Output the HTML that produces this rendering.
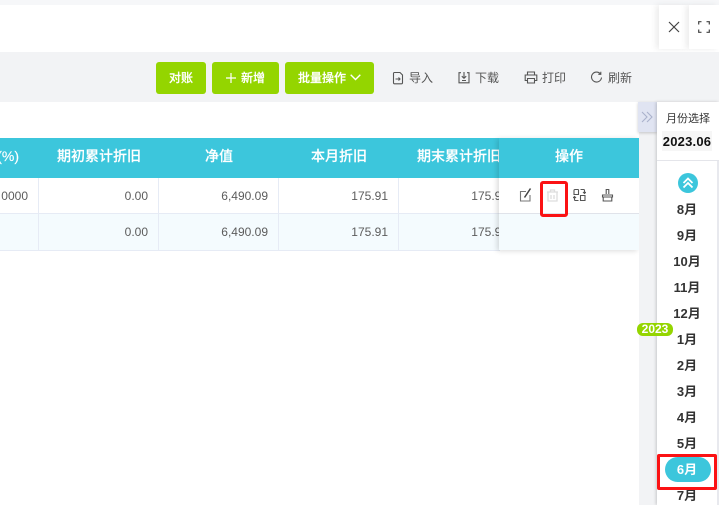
<!DOCTYPE html>
<html><head><meta charset="utf-8"><style>
html,body{margin:0;padding:0}
body{width:719px;height:505px;overflow:hidden;position:relative;background:#fff;font-family:"Liberation Sans","Noto Sans CJK SC",sans-serif;color:#333}
div,span,svg{position:absolute;box-sizing:border-box}
.t{white-space:nowrap;line-height:1}
.btn{background:#94d500;border-radius:3px;top:62px;height:32px;color:#fff;font-size:12px;font-weight:500;-webkit-text-stroke:.2px #fff;text-align:center;line-height:32px}
.tool{top:63px;height:30px;line-height:30px;font-size:12px;color:#555;white-space:nowrap}
.th{top:138px;height:40px;line-height:37px;color:#fff;font-size:14px;font-weight:500;-webkit-text-stroke:.15px #fff;text-align:center;white-space:nowrap}
.td{height:16px;line-height:16px;font-size:12px;color:#5c5c5c;text-align:right;white-space:nowrap}
.vl{width:1px;background:#e6ebf5}
.hl{height:1px;background:#e6ebf5;left:0}
.m{left:657px;width:60px;text-align:center;font-size:13px;font-weight:700;color:#333;line-height:16px;height:16px}
svg{fill:none;stroke:#555;stroke-width:1.1}
</style></head><body>
<div style="left:0;top:0;width:719px;height:5px;background:#f6f7f9"></div>
<div style="left:659px;top:5px;width:30px;height:44px;background:#fff;box-shadow:-3px 0 6px rgba(0,0,0,.08)"></div>
<div style="left:689px;top:5px;width:30px;height:44px;background:#fff;box-shadow:-3px 0 6px rgba(0,0,0,.08)"></div>
<svg style="left:668px;top:21px" width="12" height="12" viewBox="0 0 12 12"><path d="M1 1L11 11M11 1L1 11" stroke="#444" stroke-width="1.2"/></svg>
<svg style="left:698px;top:21px" width="12" height="12" viewBox="0 0 12 12"><path d="M.7 3.5V.7H3.5M8.5.7H11.3V3.5M11.3 8.5V11.3H8.5M3.5 11.3H.7V8.5" stroke="#444" stroke-width="1.2"/></svg>

<div style="left:0;top:52px;width:719px;height:50px;background:#f2f3f5"></div>
<div class="btn" style="left:156px;width:50px">对账</div>
<div class="btn" style="left:212px;width:67px"><svg style="left:14px;top:11px;stroke:#fff;stroke-width:1.2" width="10" height="10" viewBox="0 0 10 10"><path d="M5 0V10M0 5H10"/></svg><span style="left:29px;top:0">新增</span></div>
<div class="btn" style="left:285px;width:89px"><span style="left:13px;top:0">批量操作</span><svg style="left:65px;top:12px;stroke:#fff;stroke-width:1.4" width="11" height="7" viewBox="0 0 11 7"><path d="M.7.7L5.5 5.5 10.300.7"/></svg></div>

<svg style="left:392px;top:71px" width="12" height="14" viewBox="0 0 12 14"><path d="M8 1.500H2.500A1 1 0 0 0 1.500 2.500V11.800A1 1 0 0 0 2.500 12.800H9.500A1 1 0 0 0 10.500 11.800V4ZM3.500 8H8M6.500 6.500L8 8 6.500 9.500"/></svg>
<div class="tool" style="left:409px">导入</div>
<svg style="left:458px;top:71px" width="12" height="13" viewBox="0 0 12 13"><path d="M3 1.700H1V11.800H11V1.700H9M6 1V7M3.800 5.200L6 7.300 8.200 5.200M4 9.500H8"/></svg>
<div class="tool" style="left:475px">下载</div>
<svg style="left:524px;top:71px" width="14" height="13" viewBox="0 0 14 13"><path d="M3.500 4V1H10.500V4M3.500 9.500H1.200V4H12.800V9.500H10.500M3.500 7.500H10.500V12H3.500Z"/></svg>
<div class="tool" style="left:542px">打印</div>
<svg style="left:590px;top:71px" width="13" height="13" viewBox="0 0 13 13"><path d="M10.500 3A5 5 0 1 0 11.500 6.500M10.800 .8V3.300H8.300"/></svg>
<div class="tool" style="left:608px">刷新</div>

<div class="th" style="left:0;width:639px;background:#3cc6dc"></div>
<div class="th" style="left:-3px;width:22px;text-align:right">(%)</div>
<div class="th" style="left:39px;width:120px">期初累计折旧</div>
<div class="th" style="left:159px;width:120px">净值</div>
<div class="th" style="left:279px;width:120px">本月折旧</div>
<div class="th" style="left:399px;width:120px">期末累计折旧</div>

<div style="left:0;top:178px;width:638px;height:36px;background:#fff"></div>
<div style="left:0;top:214px;width:638px;height:36px;background:#f4fbfe"></div>
<div class="hl" style="top:213px;width:500px"></div>
<div class="hl" style="top:250px;width:500px"></div>
<div class="vl" style="left:38px;top:178px;height:72px"></div>
<div class="vl" style="left:158px;top:178px;height:72px"></div>
<div class="vl" style="left:278px;top:178px;height:72px"></div>
<div class="vl" style="left:398px;top:178px;height:72px"></div>

<div class="td" style="left:0;top:188px;width:28px">0000</div>
<div class="td" style="left:60px;top:188px;width:88px">0.00</div>
<div class="td" style="left:180px;top:188px;width:88px">6,490.09</div>
<div class="td" style="left:300px;top:188px;width:88px">175.91</div>
<div class="td" style="left:420px;top:188px;width:88px">175.91</div>
<div class="td" style="left:60px;top:224px;width:88px">0.00</div>
<div class="td" style="left:180px;top:224px;width:88px">6,490.09</div>
<div class="td" style="left:300px;top:224px;width:88px">175.91</div>
<div class="td" style="left:420px;top:224px;width:88px">175.91</div>

<div style="left:499px;top:138px;width:140px;height:112px;background:#fff;box-shadow:-2px 1px 5px rgba(0,0,0,.14)"></div>
<div class="th" style="left:499px;width:140px;background:#3cc6dc">操作</div>
<div style="left:499px;top:213px;width:140px;height:37px;background:#f4fbfe;border-top:1px solid #e0e3ea"></div>
<svg style="left:519px;top:187px" width="13" height="15" viewBox="0 0 13 15"><path d="M7 4.500H1.500V14H11V8" stroke="#777"/><path d="M5.500 10.500L11.500 1.500" stroke="#444" stroke-width="1.500"/></svg>
<svg style="left:546px;top:189px;stroke:#ddd;stroke-width:1.300" width="13" height="13" viewBox="0 0 13 13"><path d="M1 3H12M4.500 3V1H8.500V3M2 3V12H11V3M5 6V10M8 6V10"/></svg>
<svg style="left:573px;top:188px" width="13" height="14" viewBox="0 0 13 14"><path d="M5.500 1.500H2A1 1 0 0 0 1 2.500V6.500H5.500V1.500M7.500 1.500H10.500A1 1 0 0 1 11.500 2.500V5.500M10 4L11.500 5.500 13 4M7.500 7.500H12V12.500H7.500ZM5.500 12.500H2.500A1 1 0 0 1 1.500 11.500V8.500M0 10L1.500 8.500 3 10"/></svg>
<svg style="left:601px;top:188px" width="13" height="14" viewBox="0 0 13 14"><path d="M5.200 6V1.500H7.800V6M1.500 7H11.500V9H1.500ZM2.200 9V13H10.800V9"/></svg>
<div style="left:540px;top:181px;width:28px;height:36px;border:3px solid #fb1214;border-radius:3px"></div>

<div style="left:639px;top:102px;width:80px;height:403px;background:#f2f3f5"></div>
<div style="left:638px;top:102px;width:19px;height:30px;background:#e0e4f2;box-shadow:0 1px 3px rgba(0,0,0,.2)"></div>
<svg style="left:641px;top:111px;stroke:#aab2cc" width="12" height="12" viewBox="0 0 12 12"><path d="M1 1L6 6 1 11M6 1L11 6 6 11"/></svg>
<div style="left:657px;top:102px;width:62px;height:403px;background:#fff;box-shadow:-1px 0 3px rgba(0,0,0,.18)"></div>
<div style="left:717px;top:161px;width:2px;height:344px;background:#e8e9ee"></div>
<div style="left:657px;top:160px;width:62px;height:1px;background:#e4e5ea"></div>
<div class="t" style="left:657px;top:114px;width:62px;text-align:center;font-size:11px;color:#333">月份选择</div>
<div style="left:662px;top:131px;width:50px;height:20px;background:#f6f6f6"></div>
<div class="t" style="left:657px;top:135px;width:60px;text-align:center;font-size:13px;font-weight:700;color:#111;letter-spacing:.2px">2023.06</div>
<div style="left:678px;top:173px;width:20px;height:20px;border-radius:50%;background:#3cc6dc"></div>
<svg style="left:682px;top:177px;stroke:#fff;stroke-width:1.800" width="12" height="12" viewBox="0 0 12 12"><path d="M1.500 6L6 1.500 10.500 6M1.500 10.500L6 6 10.500 10.500"/></svg>
<div class="m" style="top:202px">8月</div>
<div class="m" style="top:228px">9月</div>
<div class="m" style="top:254px">10月</div>
<div class="m" style="top:280px">11月</div>
<div class="m" style="top:306px">12月</div>
<div class="m" style="top:332px">1月</div>
<div class="m" style="top:358px">2月</div>
<div class="m" style="top:384px">3月</div>
<div class="m" style="top:410px">4月</div>
<div class="m" style="top:436px">5月</div>
<div style="left:665px;top:457px;width:46px;height:25px;border-radius:13px;background:#3cc6dc"></div>
<div class="m" style="top:462px;color:#fff">6月</div>
<div class="m" style="top:488px">7月</div>
<div style="left:657px;top:454px;width:60px;height:36px;border:3px solid #fb1214;border-radius:2px"></div>
<div style="left:637px;top:323px;width:36px;height:13px;border-radius:6px;background:#94d500;color:#fff;font-size:12px;font-weight:700;line-height:13px;text-align:center">2023</div>
</body></html>
